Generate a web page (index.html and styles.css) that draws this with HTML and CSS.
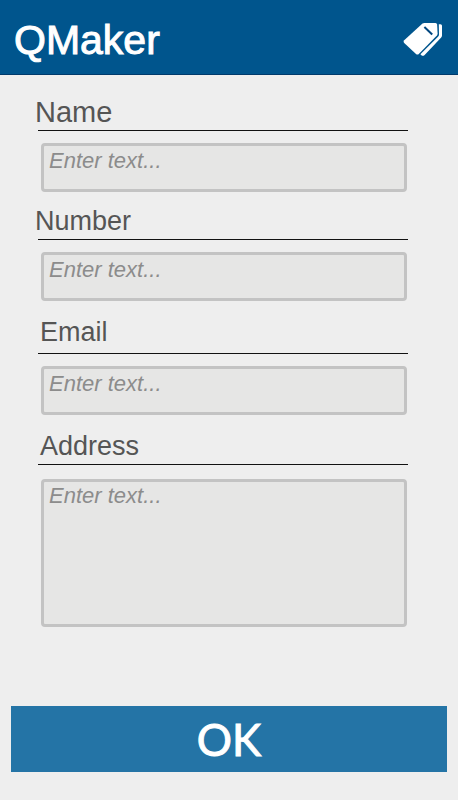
FILE: index.html
```html
<!DOCTYPE html>
<html lang="en">
<head>
    <meta charset="UTF-8">
    <meta name="viewport" content="width=device-width, initial-scale=1.0">
    <title>QMaker</title>
    <link rel="stylesheet" href="styles.css">
</head>
<body>
    <header class="header">
        <h1>QMaker</h1>
        <button type="button" class="tag-button" aria-label="Tags">
            <svg width="40" height="36" viewBox="0 0 40 36">
                <path fill="#fff" d="M20.5 1.6Q21.3 1 22.3 1H33.5Q35 1 35.1 2.5L35.6 11.5Q35.6 12.6 34.9 13.4L16.8 32Q15.4 33.2 14 32L2.2 21Q0.8 19.6 2.2 18.2Z"/>
                <path fill="#fff" d="M36.8 2.2H38.5Q40 2.3 40 3.8V13.6Q40 14.7 39.2 15.5L22.4 33.2Q20.8 34.5 19.4 33.2L18.4 32.2L36 14.8Q37 13.8 37 12.5Z"/>
                <path stroke="#00467f" stroke-width="2" d="M22.4 5L30.2 12.4"/>
            </svg>
        </button>
    </header>

    <form class="form">
        <div class="field">
            <label class="label label-name" for="name">Name</label>
            <input type="text" id="name" placeholder="Enter text...">
        </div>
        <div class="field">
            <label class="label" for="number">Number</label>
            <input type="text" id="number" placeholder="Enter text...">
        </div>
        <div class="field field-contact">
            <label class="label label-email" for="email">Email</label>
            <input type="email" id="email" placeholder="Enter text...">
        </div>
        <div class="field field-contact">
            <label class="label" for="address">Address</label>
            <textarea id="address" placeholder="Enter text..."></textarea>
        </div>

        <button type="submit" class="ok-button">OK</button>
    </form>
</body>
</html>
```

FILE: styles.css
```css
:root {
    --primary: #00558d;
    --accent: #2474a6;
    --background: #eeeeee;
}

* {
    margin: 0;
    padding: 0;
    box-sizing: border-box;
}

body {
    display: flex;
    flex-direction: column;
    min-height: 100vh;
    font-family: "Liberation Sans", Arial, sans-serif;
    background: var(--background);
}

.header {
    display: flex;
    align-items: center;
    justify-content: space-between;
    height: 75px;
    padding: 5px 16px 0 14px;
    background: var(--primary);
    border-bottom: 1px solid #003a6b;
}

.header h1 {
    font-size: 41px;
    font-weight: normal;
    line-height: 48px;
    color: white;
    -webkit-text-stroke: 1px white;
}

.tag-button {
    background: none;
    border: none;
    cursor: pointer;
}

.tag-button svg {
    display: block;
    fill: none;
}

.form {
    flex: 1;
    display: flex;
    flex-direction: column;
    padding: 22px 11px 28px;
}

.field {
    margin: 0 39px 14px 27px;
}

.label {
    display: block;
    padding-bottom: 3px;
    border-bottom: 1px solid #111;
    font-size: 27px;
    line-height: 30px;
    text-indent: -3px;
    color: #555;
}

.label-name {
    font-size: 29px;
}

.label-email {
    padding-bottom: 6px;
}

.field-contact {
    padding-top: 2px;
}

.field-contact .label {
    text-indent: 2px;
}

input, textarea {
    display: block;
    width: calc(100% - 4px);
    height: 49px;
    margin: 12px 1px 0 3px;
    padding: 0 5px 14px;
    border: 3px solid #c3c3c3;
    border-radius: 4px;
    background: #e6e6e5;
    font-family: inherit;
    font-size: 22px;
    line-height: 28px;
    color: #555;
}

textarea {
    height: 148px;
    margin-top: 14px;
    resize: none;
}

input::placeholder, textarea::placeholder {
    font-style: italic;
    color: #8c8c8c;
}

.ok-button {
    height: 66px;
    margin-top: auto;
    background: var(--accent);
    border: none;
    font-family: Lato, sans-serif;
    font-size: 44px;
    color: white;
    -webkit-text-stroke: 1px white;
    cursor: pointer;
}
```
